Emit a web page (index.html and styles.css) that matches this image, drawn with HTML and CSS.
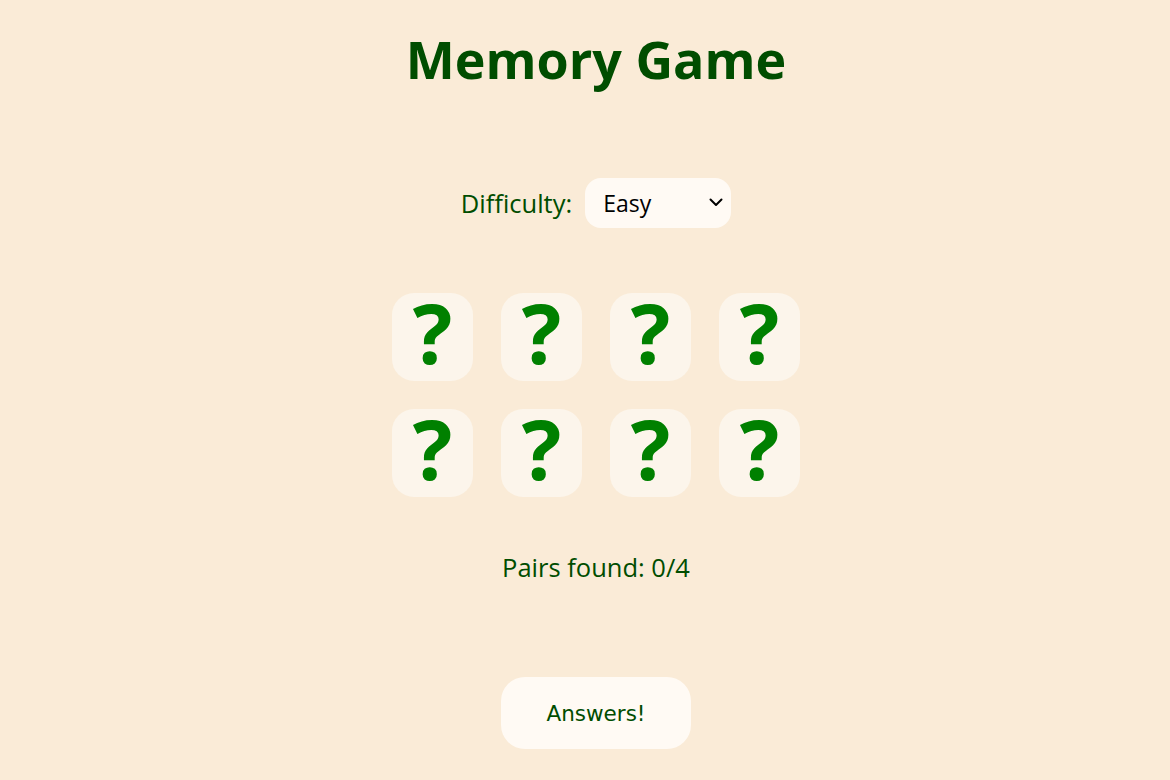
FILE: index.html
```html
<!DOCTYPE html>
<html lang="en">
<head>
<meta charset="utf-8">
<title>Memory Game</title>
<link rel="stylesheet" href="styles.css">
</head>
<body>
<main class="page">
  <h1 class="title">Memory Game</h1>
  <div class="difficulty">
    <label class="diff-label" for="diff">Difficulty:</label>
    <div class="select-wrap">
      <select id="diff" class="select">
        <option>Easy</option>
        <option>Medium</option>
        <option>Hard</option>
      </select>
      <svg class="chev" width="14" height="9" viewBox="0 0 14 9"><path d="M1.5 1.5 L7 7 L12.5 1.5" fill="none" stroke="#000" stroke-width="2" stroke-linecap="round" stroke-linejoin="round"/></svg>
    </div>
  </div>
  <div class="grid">
    <div class="card">?</div>
    <div class="card">?</div>
    <div class="card">?</div>
    <div class="card">?</div>
    <div class="card">?</div>
    <div class="card">?</div>
    <div class="card">?</div>
    <div class="card">?</div>
  </div>
  <p class="pairs">Pairs found: 0/4</p>
  <button class="answers">Answers!</button>
</main>
</body>
</html>
```

FILE: styles.css
```css
html, body {
  margin: 0;
  padding: 0;
  background: #faebd7;
}
.page {
  display: flex;
  flex-direction: column;
  align-items: center;
  padding-left: 22px;
  font-family: "Open Sans", "Noto Sans", sans-serif;
  color: #004d00;
}
.title {
  margin: 21px 0 0 0;
  font-size: 52px;
  font-weight: 700;
  line-height: 76px;
  height: 76px;
}
.difficulty {
  display: flex;
  align-items: center;
  gap: 13px;
  margin-top: 81px;
  height: 50px;
}
.diff-label {
  font-size: 25.5px;
}
.select-wrap {
  position: relative;
  width: 146px;
  height: 50px;
}
.select {
  appearance: none;
  -webkit-appearance: none;
  width: 146px;
  height: 50px;
  border: none;
  border-radius: 16px;
  background: #fffaf4;
  font-family: "Open Sans", "Noto Sans", sans-serif;
  font-size: 23px;
  color: #000;
  padding: 0 0 0 18px;
  outline: none;
}
.chev {
  position: absolute;
  right: 8px;
  top: 20px;
  pointer-events: none;
}
.grid {
  display: grid;
  grid-template-columns: repeat(4, 81px);
  grid-auto-rows: 88px;
  column-gap: 28px;
  row-gap: 28px;
  margin-top: 65px;
}
.card {
  background: #fcf5eb;
  border-radius: 22px;
  display: flex;
  align-items: center;
  justify-content: center;
  font-family: "Open Sans", "Noto Sans", sans-serif;
  font-weight: 700;
  font-size: 83px;
  line-height: 1;
  color: #008000;
  padding-bottom: 12px;
  box-sizing: border-box;
}
.pairs {
  margin: 50px 0 0 0;
  font-size: 25.5px;
  line-height: 40px;
}
.answers {
  margin-top: 90px;
  width: 190px;
  height: 72px;
  border: none;
  border-radius: 24px;
  background: #fffaf4;
  color: #004d00;
  font-family: "DejaVu Sans", Verdana, sans-serif;
  font-size: 21.5px;
}
```
